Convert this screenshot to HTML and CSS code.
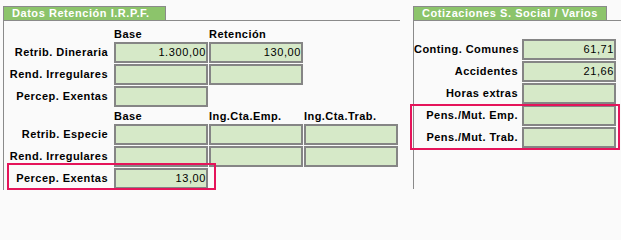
FILE: index.html
```html
<!DOCTYPE html>
<html lang="es">
<head>
<meta charset="utf-8">
<title>Datos Retención</title>
<link rel="stylesheet" href="styles.css">
</head>
<body>
<div class="page">
  <section class="panel panel-left">
    <div class="tab tab-left">Datos Retención I.R.P.F.</div>
    <div class="body">
      <div class="grid grid-top">
        <div class="lbl"></div>
        <div class="hdr">Base</div>
        <div class="hdr">Retención</div>
        <div class="hdr"></div>

        <div class="lbl">Retrib. Dineraria</div>
        <div class="fld">1.300,00</div>
        <div class="fld">130,00</div>
        <div></div>

        <div class="lbl">Rend. Irregulares</div>
        <div class="fld"></div>
        <div class="fld"></div>
        <div></div>

        <div class="lbl">Percep. Exentas</div>
        <div class="fld"></div>
        <div></div>
        <div></div>
      </div>

      <div class="grid grid-bottom">
        <div class="lbl"></div>
        <div class="hdr">Base</div>
        <div class="hdr">Ing.Cta.Emp.</div>
        <div class="hdr">Ing.Cta.Trab.</div>

        <div class="lbl">Retrib. Especie</div>
        <div class="fld"></div>
        <div class="fld"></div>
        <div class="fld"></div>

        <div class="lbl">Rend. Irregulares</div>
        <div class="fld"></div>
        <div class="fld"></div>
        <div class="fld"></div>

        <div class="lbl">Percep. Exentas</div>
        <div class="fld">13,00</div>
        <div></div>
        <div></div>

        <span class="hl hl-left"></span>
      </div>
    </div>
  </section>

  <section class="panel panel-right">
    <div class="tab tab-right">Cotizaciones S. Social / Varios</div>
    <div class="body">
      <div class="grid grid-right">
        <div class="lbl">Conting. Comunes</div>
        <div class="fld">61,71</div>
        <div class="lbl">Accidentes</div>
        <div class="fld">21,66</div>
        <div class="lbl">Horas extras</div>
        <div class="fld"></div>
        <div class="lbl">Pens./Mut. Emp.</div>
        <div class="fld"></div>
        <div class="lbl">Pens./Mut. Trab.</div>
        <div class="fld"></div>
        <span class="hl hl-right"></span>
      </div>
    </div>
  </section>
</div>
</body>
</html>
```

FILE: styles.css
```css
html, body {
  margin: 0;
  padding: 0;
  background: #fafafa;
}

body {
  font-family: "Liberation Sans", Arial, sans-serif;
  font-size: 11px;
  color: #000;
  overflow: hidden;
}

.page {
  display: flex;
  gap: 13px;
  padding: 6px 0 0 3px;
}

.panel {
  display: flex;
  flex-direction: column;
}

.panel-left {
  width: 397px;
  flex: none;
}

.panel-right {
  flex: 1;
}

.tab {
  box-sizing: border-box;
  height: 14px;
  border: 1px solid #8a8a8a;
  border-bottom: none;
  background: #8cc46b;
  color: #fff;
  font-weight: bold;
  letter-spacing: 0.55px;
  line-height: 13px;
  padding-left: 8px;
  white-space: nowrap;
}

.tab-left { width: 163px; }
.tab-right { width: 194px; }

.body {
  border-top: 1px solid #8a8a8a;
  border-left: 1px solid #8a8a8a;
}

.panel-left .body {
  padding-bottom: 1px;
}

.panel-right .body {
  height: 169px;
  padding-top: 18px;
  box-sizing: border-box;
}

.grid {
  position: relative;
  display: grid;
  column-gap: 1px;
  row-gap: 1px;
}

.grid-top,
.grid-bottom {
  grid-template-columns: 109px 94px 94px 94px;
  grid-template-rows: 13px repeat(3, 21px);
}

.grid-top { margin-top: 7px; }
.grid-bottom { margin-top: 3px; }

.grid-right {
  grid-template-columns: 104px 94px;
  grid-auto-rows: 21px;
  column-gap: 4px;
}

.lbl {
  font-weight: bold;
  letter-spacing: 0.45px;
  text-align: right;
  line-height: 21px;
  white-space: nowrap;
}

.grid-top .lbl,
.grid-bottom .lbl {
  padding-right: 5px;
}

.hdr {
  font-weight: bold;
  letter-spacing: 0.45px;
  line-height: 13px;
  white-space: nowrap;
}

.fld {
  box-sizing: border-box;
  height: 21px;
  border: 2px solid #858585;
  background: #d6e9c8;
  text-align: right;
  letter-spacing: 0.6px;
  line-height: 17px;
  padding-right: 0;
  white-space: nowrap;
}

.hl {
  position: absolute;
  box-sizing: border-box;
  border: 2px solid #e5145a;
  pointer-events: none;
}

.hl-left {
  grid-row: 4;
  grid-column: 1 / span 2;
  top: -5px;
  left: 3px;
  right: -8px;
  bottom: -1px;
}

.hl-right {
  grid-row: 4 / span 2;
  grid-column: 1 / span 2;
  top: -1px;
  left: -4px;
  right: -4px;
  bottom: -2px;
}
```
